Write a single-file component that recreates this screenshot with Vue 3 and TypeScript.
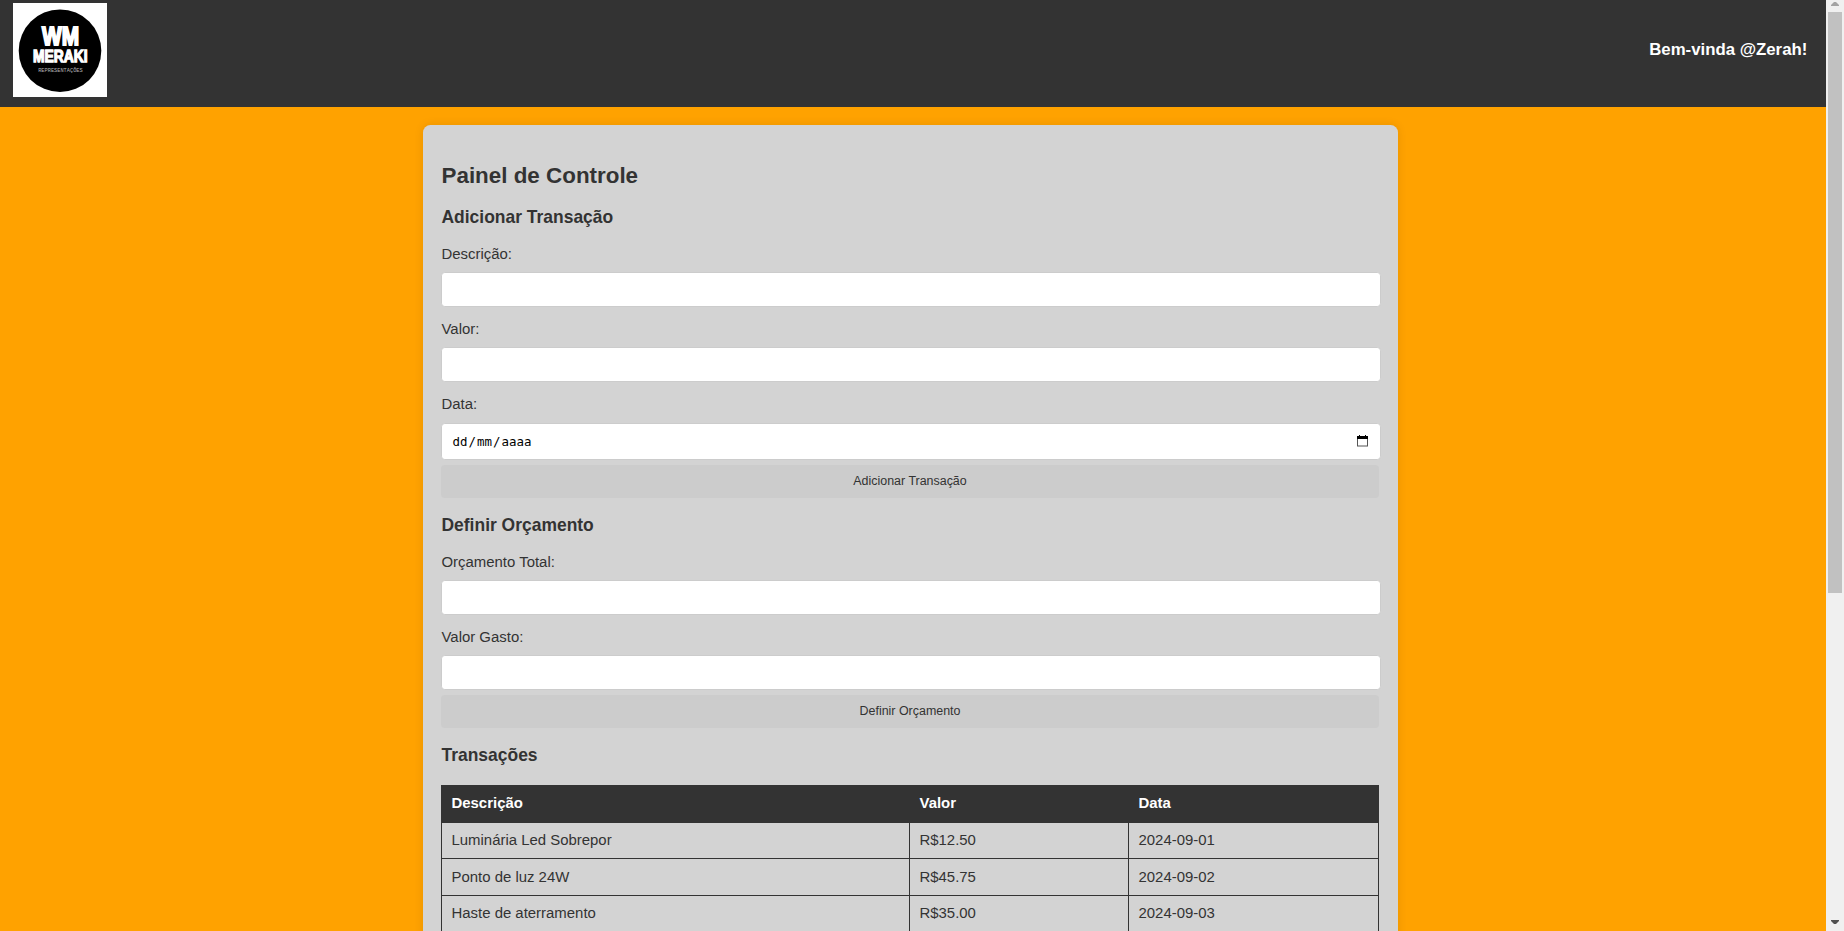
<script setup lang="ts">
interface Transacao {
  descricao: string
  valor: string
  data: string
}

const transacoes: Transacao[] = [
  { descricao: 'Luminária Led Sobrepor', valor: 'R$12.50', data: '2024-09-01' },
  { descricao: 'Ponto de luz 24W', valor: 'R$45.75', data: '2024-09-02' },
  { descricao: 'Haste de aterramento', valor: 'R$35.00', data: '2024-09-03' },
]
</script>

<template>
  <div class="window">
    <div class="page">
      <header class="topbar">
        <svg class="logo" viewBox="0 0 94 94" role="img" aria-label="Meraki Representações">
          <rect width="94" height="94" fill="#fff" />
          <circle cx="47" cy="47.7" r="41.3" fill="#000" />
          <g fill="#fff" stroke="#fff" font-weight="700">
            <text class="mark" x="29" y="42" font-size="26.5" stroke-width="2" textLength="37" lengthAdjust="spacingAndGlyphs">WM</text>
            <text class="mark" x="20" y="59.2" font-size="16.5" stroke-width="1.3" textLength="54.5" lengthAdjust="spacingAndGlyphs">MERAKI</text>
          </g>
          <text class="tagline" x="25.2" y="69.4" font-size="5.3" fill="#b4b4b4">REPRESENTAÇÕES</text>
        </svg>
        <span class="welcome">Bem-vinda @Zerah!</span>
      </header>

      <main class="panel">
        <h2>Painel de Controle</h2>

        <h3>Adicionar Transação</h3>
        <form @submit.prevent>
          <div class="field">
            <label for="descricao">Descrição:</label>
            <input id="descricao" type="text" />
          </div>
          <div class="field">
            <label for="valor">Valor:</label>
            <input id="valor" type="text" />
          </div>
          <div class="field field-date">
            <label>Data:</label>
            <div class="date">
              <span class="mask"><span>dd</span><i>/</i><span>mm</span><i>/</i><span>aaaa</span></span>
              <svg class="calendar" width="11" height="12" viewBox="0 0 11 12">
                <rect x="0.5" y="1.5" width="10" height="9.5" fill="none" stroke="#555" />
                <path d="M0 1h11v3H0zM2 0h1v1H2zM8 0h1v1H8z" fill="#000" />
              </svg>
            </div>
          </div>
          <button type="submit">Adicionar Transação</button>
        </form>

        <h3>Definir Orçamento</h3>
        <form @submit.prevent>
          <div class="field">
            <label for="total">Orçamento Total:</label>
            <input id="total" type="text" />
          </div>
          <div class="field">
            <label for="gasto">Valor Gasto:</label>
            <input id="gasto" type="text" />
          </div>
          <button type="submit">Definir Orçamento</button>
        </form>

        <h3>Transações</h3>
        <table>
          <colgroup>
            <col class="c1" />
            <col class="c2" />
            <col />
          </colgroup>
          <thead>
            <tr><th>Descrição</th><th>Valor</th><th>Data</th></tr>
          </thead>
          <tbody>
            <tr v-for="t in transacoes" :key="t.data">
              <td>{{ t.descricao }}</td>
              <td>{{ t.valor }}</td>
              <td>{{ t.data }}</td>
            </tr>
          </tbody>
        </table>
      </main>
    </div>

    <div class="scrollbar">
      <svg width="8" height="4" viewBox="0 0 8 4"><path d="M0 4V3L3 0h2l3 3v1z" fill="#a3a3a3" /></svg>
      <div class="thumb"></div>
      <svg class="down" width="8" height="4" viewBox="0 0 8 4"><path d="M0 0v1l3 3h2l3-3V0z" fill="#505050" /></svg>
    </div>
  </div>
</template>

<style>
body {
  margin: 0;
  overflow: hidden;
}
</style>

<style scoped>
.window {
  display: flex;
  height: 931px;
  overflow: hidden;
  font-family: "Liberation Sans", Arial, sans-serif;
  font-size: 14.93px;
  color: #333;
}
.page {
  flex: 1;
  height: 931px;
  overflow: hidden;
  background: #ffa200;
}
.topbar {
  box-sizing: border-box;
  display: flex;
  justify-content: space-between;
  height: 107px;
  padding: 3px 18.7px 0 13px;
  background: #333;
}
.logo {
  width: 94px;
  height: 94px;
}
.mark {
  font-family: "Liberation Sans", Arial, sans-serif;
}
.tagline {
  font-family: "Liberation Mono", monospace;
}
.welcome {
  margin-top: 37px;
  line-height: 19px;
  font-size: 16.8px;
  font-weight: 700;
  color: #fff;
}
.panel {
  box-sizing: border-box;
  width: 975px;
  margin: 18px 0 0 423px;
  padding: 38px 18px 40px;
  border-radius: 7.5px;
  background: #d3d3d3;
  box-shadow: 0 0 9.3px rgba(0, 0, 0, 0.1);
}
h2,
h3,
label {
  padding-left: 0.5px;
}
h2 {
  margin: 0 0 18px;
  font-size: 22.4px;
  line-height: 26px;
}
h3 {
  margin: 0 0 18px;
  font-size: 17.47px;
  line-height: 20px;
}
form {
  margin-bottom: 17px;
}
.field {
  display: flex;
  flex-direction: column;
  margin-bottom: 13px;
}
.field-date label {
  height: 28px;
}
.field:has(+ button) {
  margin-bottom: 5px;
}
label {
  height: 27px;
  line-height: 17px;
}
input,
.date {
  box-sizing: border-box;
  width: 940px;
  height: 35px;
  padding: 0 9.3px;
  border: 1px solid #ccc;
  border-radius: 3.7px;
  background: #fff;
  outline: none;
}
.date {
  display: flex;
  align-items: center;
  justify-content: space-between;
  height: 37px;
  padding: 0 12px 0 9.5px;
  font-family: "DejaVu Sans Mono", monospace;
  font-size: 12.44px;
  color: #000;
}
.mask {
  display: flex;
}
.mask span {
  padding: 0 1px;
}
.mask i {
  font-style: normal;
}
.calendar {
  margin-bottom: 1px;
}
button {
  display: block;
  width: 938px;
  height: 33px;
  padding: 0 0 1px;
  border: 0;
  border-radius: 3.7px;
  background: #ccc;
  font-family: inherit;
  font-size: 12.44px;
  color: #333;
}
table {
  width: 938px;
  margin-top: 20px;
  table-layout: fixed;
  border-collapse: collapse;
}
.c1 {
  width: 468px;
}
.c2 {
  width: 219px;
}
th,
td {
  box-sizing: border-box;
  height: 36.7px;
  padding: 0 9.5px 2px;
  border: 1px solid #333;
  line-height: 17px;
  text-align: left;
}
th {
  background: #333;
  color: #fff;
}
.scrollbar {
  display: flex;
  flex-direction: column;
  align-items: center;
  box-sizing: border-box;
  width: 18px;
  height: 931px;
  padding: 2px 0 7px;
  background: #f0f0f0;
}
.thumb {
  width: 14px;
  height: 581px;
  margin-top: 6px;
  background: #c1c1c1;
}
.down {
  margin-top: auto;
}
</style>
